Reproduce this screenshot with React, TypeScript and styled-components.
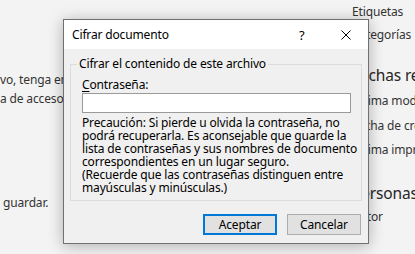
import { createGlobalStyle } from "styled-components";
import styled from "styled-components";

const GlobalStyle = createGlobalStyle`
  html, body {
    margin: 0;
    padding: 0;
    background: #f3f3f3;
    font-family: "Noto Sans", "Open Sans", sans-serif;
    -webkit-font-smoothing: antialiased;
  }
`;

const Page = styled.div`
  position: relative;
  width: 415px;
  height: 254px;
  overflow: hidden;
  display: flex;
  background: #f3f3f3;
  letter-spacing: -0.15px;
`;

const LeftPane = styled.div`
  flex: 1;
  display: flex;
  flex-direction: column;
  padding-top: 72px;
  font-size: 12px;
  line-height: 16px;
  color: #333;
  white-space: nowrap;
`;

const BodyLine = styled.div<{ $gap?: number; $indent?: number }>`
  margin-top: ${(p) => p.$gap ?? 0}px;
  padding-left: ${(p) => p.$indent ?? 0}px;
`;

const RightPane = styled.div`
  width: 63px;
  display: flex;
  flex-direction: column;
  padding-top: 4px;
  white-space: nowrap;
  color: #333;
`;

const PropLabel = styled.div<{ $gap?: number }>`
  margin-top: ${(p) => p.$gap ?? 0}px;
  font-size: 12px;
  line-height: 16px;
`;

const SectionHeading = styled.div<{ $gap?: number }>`
  margin-top: ${(p) => p.$gap ?? 0}px;
  font-size: 15.5px;
  line-height: 20px;
  color: #262626;
`;

const Dialog = styled.div`
  position: absolute;
  left: 63px;
  top: 19px;
  width: 306px;
  box-sizing: border-box;
  border: 1px solid #707070;
  background: #f0f0f0;
  box-shadow: 0 2px 14px rgba(0, 0, 0, 0.28);
  display: flex;
  flex-direction: column;
  font-size: 12px;
  color: #000;
`;

const TitleBar = styled.div`
  height: 29px;
  background: #fff;
  display: flex;
  align-items: center;
`;

const Title = styled.div`
  flex: 1;
  padding-left: 8px;
  line-height: 16px;
`;

const TitleButton = styled.div`
  width: 44px;
  height: 29px;
  display: flex;
  align-items: center;
  justify-content: center;
  font-size: 13px;
`;

const HelpButton = styled(TitleButton)`
  justify-content: flex-start;
  padding-left: 19px;
  box-sizing: border-box;
`;

const Body = styled.div`
  padding: 7px 6px 8px 6px;
  display: flex;
  flex-direction: column;
`;

const Group = styled.fieldset`
  margin: 0;
  padding: 5px 10px 6px 11px;
  border: 1px solid #dcdcdc;
  display: flex;
  flex-direction: column;
  min-width: 0;
`;

const Legend = styled.legend`
  margin-left: -5px;
  padding: 0 2px;
  line-height: 16px;
`;

const FieldLabel = styled.label`
  line-height: 16px;
  & u {
    text-decoration: underline 1px #000;
    text-underline-offset: 2px;
  }
`;

const TextInput = styled.input`
  box-sizing: border-box;
  height: 20px;
  width: 100%;
  margin: 0;
  border: 1px solid #9a9a9a;
  background: #fff;
  outline: none;
  font: inherit;
  padding: 0 3px;
`;

const Note = styled.p`
  margin: 3px 0 0 0;
  line-height: 13px;
  white-space: nowrap;
`;

const ButtonRow = styled.div`
  margin-top: 13px;
  display: flex;
  justify-content: flex-end;
  gap: 10px;
  padding-right: 1px;
`;

const DialogButton = styled.button<{ $default?: boolean }>`
  box-sizing: border-box;
  width: 74px;
  height: 21px;
  margin: 0;
  padding: 0;
  background: #e1e1e1;
  border: ${(p) => (p.$default ? "2px solid #0078d7" : "1px solid #adadad")};
  font-family: inherit;
  font-size: 12px;
  letter-spacing: inherit;
  color: #000;
  line-height: 16px;
`;

const CloseIcon = () => (
  <svg width="10" height="10" viewBox="0 0 10 10">
    <path d="M0.5 0.5 L9.5 9.5 M9.5 0.5 L0.5 9.5" stroke="#000" strokeWidth="1" fill="none" />
  </svg>
);

export default function App() {
  return (
    <Page>
      <GlobalStyle />
      <LeftPane>
        <BodyLine>vo, tenga en cuenta que contiene:</BodyLine>
        <BodyLine $gap={3}>a de acceso a este archivo.</BodyLine>
        <BodyLine $gap={88} $indent={3}>guardar.</BodyLine>
      </LeftPane>
      <RightPane>
        <PropLabel>Etiquetas</PropLabel>
        <PropLabel $gap={7}>Categorías</PropLabel>
        <SectionHeading $gap={22}>Fechas relacionadas</SectionHeading>
        <PropLabel $gap={8}>Última modificación</PropLabel>
        <PropLabel $gap={9}>Fecha de creación</PropLabel>
        <PropLabel $gap={8}>Última impresión</PropLabel>
        <SectionHeading $gap={25}>Personas relacionadas</SectionHeading>
        <PropLabel $gap={6}>Autor</PropLabel>
      </RightPane>

      <Dialog role="dialog">
        <TitleBar>
          <Title>Cifrar documento</Title>
          <HelpButton>?</HelpButton>
          <TitleButton>
            <CloseIcon />
          </TitleButton>
        </TitleBar>
        <Body>
          <Group>
            <Legend>Cifrar el contenido de este archivo</Legend>
            <FieldLabel>
              <u>C</u>ontraseña:
            </FieldLabel>
            <TextInput type="password" />
            <Note>
              Precaución: Si pierde u olvida la contraseña, no
              <br />
              podrá recuperarla. Es aconsejable que guarde la
              <br />
              lista de contraseñas y sus nombres de documento
              <br />
              correspondientes en un lugar seguro.
              <br />
              (Recuerde que las contraseñas distinguen entre
              <br />
              mayúsculas y minúsculas.)
            </Note>
          </Group>
          <ButtonRow>
            <DialogButton $default>Aceptar</DialogButton>
            <DialogButton>Cancelar</DialogButton>
          </ButtonRow>
        </Body>
      </Dialog>
    </Page>
  );
}
